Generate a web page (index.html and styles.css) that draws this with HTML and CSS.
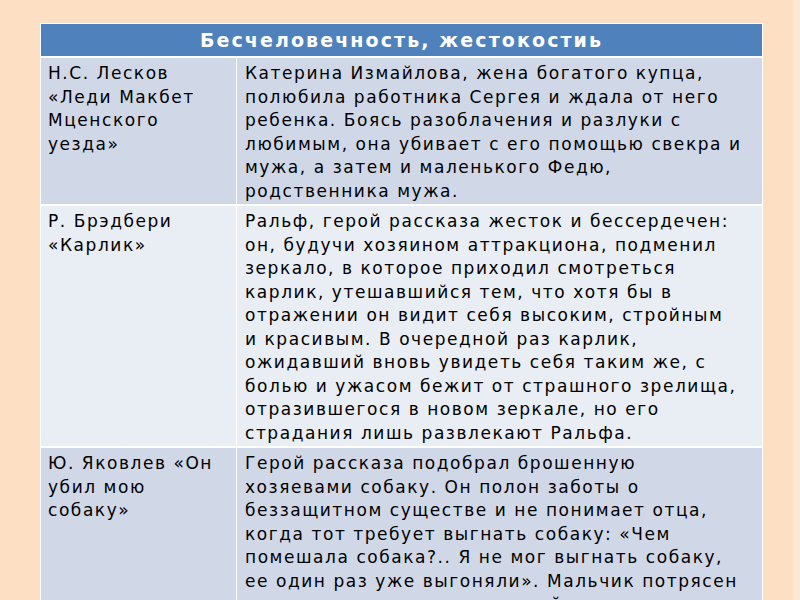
FILE: index.html
```html
<!DOCTYPE html>
<html lang="ru">
<head>
<meta charset="utf-8">
<title>Бесчеловечность, жестокость</title>
<link rel="stylesheet" href="styles.css">
</head>
<body>
<div class="slide">
  <table class="grid">
    <colgroup>
      <col class="col-author">
      <col class="col-text">
    </colgroup>
    <thead>
      <tr><th colspan="2">Бесчеловечность, жестокостиь</th></tr>
    </thead>
    <tbody>
      <tr class="odd">
        <td class="author">Н.С. Лесков «Леди Макбет Мценского уезда»</td>
        <td class="text">Катерина Измайлова, жена богатого купца,<br>полюбила работника Сергея и ждала от него<br>ребенка. Боясь разоблачения и разлуки с<br>любимым, она убивает с его помощью свекра и<br>мужа, а затем и маленького Федю,<br>родственника мужа.</td>
      </tr>
      <tr class="even">
        <td class="author">Р. Брэдбери «Карлик»</td>
        <td class="text">Ральф, герой рассказа жесток и бессердечен:<br>он, будучи хозяином аттракциона, подменил<br>зеркало, в которое приходил смотреться<br>карлик, утешавшийся тем, что хотя бы в<br>отражении он видит себя высоким, стройным<br>и красивым. В очередной раз карлик,<br>ожидавший вновь увидеть себя таким же, с<br>болью и ужасом бежит от страшного зрелища,<br>отразившегося в новом зеркале, но его<br>страдания лишь развлекают Ральфа.</td>
      </tr>
      <tr class="odd">
        <td class="author">Ю. Яковлев «Он убил мою собаку»</td>
        <td class="text">Герой рассказа подобрал брошенную<br>хозяевами собаку. Он полон заботы о<br>беззащитном существе и не понимает отца,<br>когда тот требует выгнать собаку: «Чем<br>помешала собака?.. Я не мог выгнать собаку,<br>ее один раз уже выгоняли». Мальчик потрясен<br>равнодушием взрослых людей, жестокостью отца.</td>
      </tr>
    </tbody>
  </table>
</div>
</body>
</html>
```

FILE: styles.css
```css
html, body {
  margin: 0;
  padding: 0;
  width: 800px;
  height: 600px;
  overflow: hidden;
}

body {
  background: linear-gradient(to right, #fde0c3 0, #fde0c3 793px, #fde7d5 793px, #fde7d5 800px);
  font-family: "DejaVu Sans", "Noto Sans", sans-serif;
  color: #000;
}

.slide {
  padding: 23px 0 0 40px;
}

.grid {
  width: 722px;
  border-collapse: collapse;
  table-layout: fixed;
  border: 1px solid #fff;
}

.col-author {
  width: 196px;
}

.col-text {
  width: 526px;
}

.grid th {
  background: #4f81bd;
  color: #fff;
  font-weight: bold;
  font-size: 19px;
  letter-spacing: 2.1px;
  height: 32px;
  padding: 0;
  text-align: center;
  vertical-align: middle;
  border-bottom: 2px solid #fff;
}

.grid td {
  vertical-align: top;
  font-size: 17px;
  line-height: 23.5px;
  letter-spacing: 1.55px;
  padding: 4px 6px 1px 7px;
  border: 1px solid #fff;
  border-top-width: 2px;
  overflow: hidden;
}

.grid td.text {
  padding-left: 8px;
  white-space: nowrap;
}

.odd td {
  background: #d0d8e8;
}

.even td {
  background: #e9edf4;
}
```
